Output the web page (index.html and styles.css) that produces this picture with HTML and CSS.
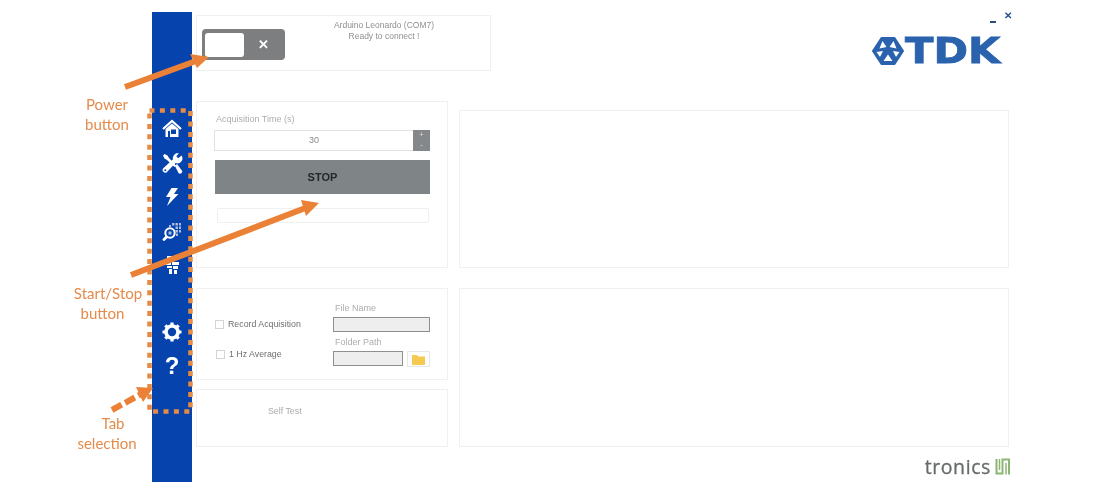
FILE: index.html
```html
<!DOCTYPE html>
<html lang="en">
<head>
<meta charset="utf-8">
<title>TDK Tronics Acquisition</title>
<link rel="stylesheet" href="styles.css">
</head>
<body>
<div class="stage">
  <div class="app">
    <nav class="sidebar">
      <div class="nav-item"><svg width="20" height="20" viewBox="0 0 20 20"><path d="M1 10 10 2l9 8" fill="none" stroke="#fff" stroke-width="2.2"/><path fill="#fff" fill-rule="evenodd" d="M3.5 10 10 4.4l6.500 5.600V18h-13zM9 10.500v4.500h5v-4.500z"/><path fill="#0743ad" d="M6 12h2v6H6z"/></svg></div>
      <div class="nav-item"><svg width="22" height="22" viewBox="0 0 22 22"><path fill="#fff" d="M2 3.500 3.500 2l3 1.500L8 6l7 7.500-1.500 1.500L6 8 3.500 6.500z"/><path fill="#fff" d="M20.500 3.500 17.500 6l-1.500-.5-.5-1.500L18 1.300a5 5 0 0 0-6 6L2 16.500a2.800 2.800 0 0 0 3.500 4l9-9.500a5 5 0 0 0 6-7.500z"/><circle cx="4.300" cy="18.300" r="1" fill="#0743ad"/><path fill="#fff" d="m14 14 2-2 4.500 6a2 2 0 0 1-3 3z"/></svg></div>
      <div class="nav-item"><svg width="14" height="20" viewBox="0 0 14 20"><path fill="#fff" d="M6.500 1H13L9 7h4.500L2 19l3.500-9H1z"/></svg></div>
      <div class="nav-item"><svg width="20" height="20" viewBox="0 0 20 20"><circle cx="8" cy="12" r="4.700" fill="none" stroke="#fff" stroke-width="2"/><path stroke="#fff" stroke-width="2.800" stroke-linecap="round" d="M4.500 16 2 18.500"/><path fill="#a9bce0" d="M7 4h2v2H7zM10 2h2.500v2.500H10zm3.500 0H16v2.500h-2.500zM17 2h2v2.500h-2zm-3.500 3.500H16V8h-2.500zM17 5.500h2V8h-2zM13.500 9H16v2.500h-2.500zM17 9h2v2.500h-2zM14 12.500h2V15h-2zM6.500 10.500h3v3h-3z"/></svg></div>
      <div class="nav-item"><svg width="16" height="20" viewBox="0 0 16 20"><path fill="#fff" d="M3 1h5v4H3zm6 1h4v3H9zM1 7h6v3H1zm7 0h7v3H8zm-5 4h5v2H3zm6 0h5v3H9zm-4 3h3v5H5zm5 1h3v4h-3z"/></svg></div>
      <div class="nav-item nav-gap"><svg width="20" height="20" viewBox="0 0 20 20"><circle cx="10" cy="10" r="6" fill="none" stroke="#fff" stroke-width="3.600"/><path stroke="#fff" stroke-width="3.200" d="M10 .5v3M10 16.500v3M.5 10h3M16.500 10h3M3.300 3.300l2.100 2.100M14.600 14.600l2.100 2.100M3.300 16.700l2.100-2.100M14.600 5.400l2.100-2.100"/></svg></div>
      <div class="nav-item nav-help">?</div>
    </nav>

    <main class="main">
      <header class="header">
        <section class="panel status-panel">
          <div class="toggle"><span class="knob"></span><span class="toggle-x">✕</span></div>
          <div class="status">Arduino Leonardo (COM7)<br>Ready to connect !</div>
        </section>
        <div class="brand">
          <div class="win-controls"><span class="win-min"></span><span class="win-close">✕</span></div>
          <div class="tdk">
            <svg width="32" height="28" viewBox="0 0 32 28"><path fill="#2a62ad" stroke="#2a62ad" stroke-width="2" stroke-linejoin="round" d="M9.500 1h13l8.500 13-8.500 13h-13L1 14z"/><path fill="#fff" d="M10.500 4 14.500 10 7.500 11.500zM21.500 4 24.500 11.500 17.500 10zM4.500 15 11 14 8 20zM27.500 15 21 14 24 20zM16 17.500 20.500 24H11.500z"/></svg>
            <span class="tdk-text">TDK</span>
          </div>
        </div>
      </header>

      <div class="columns">
        <div class="col-left">
          <section class="panel acq">
            <div class="field-label">Acquisition Time (s)</div>
            <div class="spin">
              <span class="spin-value">30</span>
              <span class="spin-btns"><span>+</span><span>-</span></span>
            </div>
            <button class="stop">STOP</button>
            <div class="progress"></div>
          </section>
          <section class="panel record">
            <div class="checks">
              <label class="check"><span class="box"></span>Record Acquisition</label>
              <label class="check check-two"><span class="box"></span>1 Hz Average</label>
            </div>
            <div class="files">
              <div class="field-label">File Name</div>
              <div class="input input-wide"></div>
              <div class="field-label folder-label">Folder Path</div>
              <div class="folder-row">
                <div class="input input-short"></div>
                <div class="folder-btn"><svg width="13" height="11" viewBox="0 0 13 11"><path fill="#f6c94f" d="M0 1h5l1 1.500h7V11H0z"/></svg></div>
              </div>
            </div>
          </section>
          <section class="panel selftest">Self Test</section>
        </div>
        <div class="col-right">
          <section class="panel graph graph-a"></section>
          <section class="panel graph graph-b"></section>
          <div class="tronics">
            <span class="tronics-text">tronics</span>
            <svg width="16" height="18" viewBox="0 0 16 18"><path fill="none" stroke="#8cb573" stroke-width="2" d="M1.500 1v14.500h6V1.500h6.500V16.500"/><path fill="none" stroke="#8cb573" stroke-width="1.500" d="M4.500 1v11M11 5v11.500"/></svg>
          </div>
        </div>
      </div>
    </main>
  </div>

  <svg class="overlay" width="1105" height="496" viewBox="0 0 1105 496">
    <rect class="dots" x="149.500" y="110.500" width="41" height="301"/>
    <path class="arrow-line" d="M125 87 196 61"/>
    <path class="arrow-head" d="M209 57 190 54 197 68z"/>
    <path class="arrow-line" d="M131 275 308 207"/>
    <path class="arrow-head" d="M319 203 301 200 306 216z"/>
    <path class="arrow-dash" d="M112 410 143 393"/>
    <path class="arrow-head" d="M153 388 136 387 143 402z"/>
  </svg>
  <div class="note note-power">Power<br>button</div>
  <div class="note note-start">Start/Stop<br><span class="note-left">button</span></div>
  <div class="note note-tab"><span class="note-right">Tab</span><br>selection</div>
</div>
</body>
</html>
```
FILE: styles.css
```css
* { box-sizing: border-box; }
html, body { margin: 0; padding: 0; background: #fff; }
body { font-family: "Liberation Sans", Arial, sans-serif; overflow: hidden; }

.stage { position: relative; width: 1105px; height: 496px; overflow: hidden; filter: blur(0.35px); }
.app { display: flex; height: 482px; margin-left: 152px; padding-top: 12px; }

.sidebar { width: 40px; height: 470px; padding-top: 100px; background: #0743ad; flex: none; display: flex; flex-direction: column; }
.nav-item { height: 34px; display: flex; align-items: center; justify-content: center; }
.nav-gap { margin-top: 33px; }
.nav-help { color: #fff; font-size: 24px; font-weight: 700; }

.main { flex: 1; padding: 3px 96px 0 4px; min-width: 0; }
.panel { border: 1px solid #f0f0f0; background: #fff; }

.header { display: flex; justify-content: space-between; height: 86px; }
.status-panel { width: 295px; height: 56px; padding: 4px 5px; display: flex; align-items: flex-start; }
.toggle { width: 83px; height: 31px; margin-top: 9px; padding: 4px 3px; background: #7c7e80; border-radius: 4px; display: flex; align-items: center; }
.knob { width: 39px; height: 24px; background: #fff; border-radius: 3px; }
.toggle-x { flex: 1; text-align: center; color: #fff; font-size: 13px; font-weight: 700; }
.status { width: 102px; margin-left: 48px; text-align: center; color: #8f8f8f; font-size: 8.5px; line-height: 11px; white-space: nowrap; }

.brand { width: 139px; margin-right: -3px; display: flex; flex-direction: column; align-items: flex-end; }
.win-controls { display: flex; align-items: flex-start; gap: 8px; height: 19px; width: 22px; }
.win-min { width: 6px; height: 1.500px; margin-top: 6px; background: #2d4f80; flex: none; }
.win-close { color: #22508f; font-size: 10px; font-weight: 700; line-height: 8px; margin-top: -3px; }
.tdk { display: flex; align-items: center; gap: 1px; width: 132px; margin-right: 8px; height: 30px; margin-top: 2px; overflow: visible; }
.tdk svg { flex: none; }
.tdk-text { color: #2a62ad; font-family: "DejaVu Sans", sans-serif; font-weight: 700; font-size: 35px; line-height: 30px; -webkit-text-stroke: 0.8px #2a62ad; transform: scaleX(1.19); transform-origin: left center; }

.columns { display: grid; grid-template-columns: 252px 550px; column-gap: 11px; }
.col-left { display: flex; flex-direction: column; }
.col-right { padding-top: 9px; display: flex; flex-direction: column; }

.acq { height: 167px; padding: 12px 17px 0 17px; }
.field-label { color: #adadad; font-size: 9px; line-height: 10px; }
.acq .field-label { margin-left: 2px; }
.spin { margin-top: 6px; height: 21px; display: flex; border: 1px solid #e2e2e2; border-right: 0; }
.spin-value { flex: 1; text-align: center; color: #8a8a8a; font-size: 9px; line-height: 19px; }
.spin-btns { width: 17px; margin-top: -1px; height: 21px; background: #85888a; color: #dfdfdf; font-size: 7px; line-height: 10px; display: flex; flex-direction: column; align-items: center; }
.stop { display: block; width: 215px; height: 34px; margin: 9px 0 0 1px; padding: 0; border: 0; background: #7f8486; color: #25282b; font: 700 11px/34px "Liberation Sans", Arial, sans-serif; }
.progress { width: 212px; height: 15px; margin: 14px 0 0 3px; border: 1px solid #eef1f2; border-radius: 2px; }

.record { height: 92px; margin-top: 20px; padding: 14px 17px 0 18px; display: flex; justify-content: space-between; }
.checks { padding-top: 16px; }
.check { display: flex; align-items: center; gap: 4px; color: #6f6f6f; font-size: 8.8px; line-height: 10px; }
.check-two { margin-top: 20px; margin-left: 1px; }
.box { width: 9px; height: 9px; border: 1px solid #d4d4d4; background: #fff; flex: none; }
.files { width: 97px; }
.files .field-label { margin-left: 2px; }
.input { height: 15px; margin-top: 4px; background: #eeeeee; border: 1px solid #8f8f8f; }
.input-wide { width: 97px; }
.input-short { width: 70px; margin-top: 0; }
.folder-label { margin-top: 5px; }
.folder-row { display: flex; justify-content: space-between; margin-top: 4px; }
.folder-btn { width: 23px; height: 16px; border: 1px solid #e8e8e8; display: flex; align-items: center; justify-content: center; }

.selftest { height: 58px; margin-top: 9px; padding: 16px 0 0 71px; color: #a9a9a9; font-size: 8.8px; line-height: 10px; }

.graph-a { height: 158px; }
.graph-b { height: 159px; margin-top: 20px; }
.tronics { display: flex; align-items: center; justify-content: flex-end; gap: 4px; margin: 10px -2px 0 0; height: 20px; }
.tronics-text { color: #666c68; font-family: "Open Sans", sans-serif; font-weight: 400; font-size: 19.500px; line-height: 20px; letter-spacing: 0.6px; -webkit-text-stroke: 0.3px #666c68; }

.overlay { position: absolute; left: 0; top: 0; }
.dots { fill: none; stroke: #e98a42; stroke-width: 4.500; stroke-dasharray: 5 5.4; }
.arrow-line { fill: none; stroke: #ea8137; stroke-width: 6; }
.arrow-dash { fill: none; stroke: #ea8137; stroke-width: 6; stroke-dasharray: 11 4; }
.arrow-head { fill: #ea8137; }

.note { position: absolute; width: 90px; text-align: center; color: #e58b4c; font-family: Lato, sans-serif; font-size: 15px; line-height: 20px; }
.note-left { margin-right: 11px; }
.note-right { margin-left: 12px; }
.note-power { left: 62px; top: 94px; }
.note-start { left: 63px; top: 283px; }
.note-tab { left: 62px; top: 413px; }
```
